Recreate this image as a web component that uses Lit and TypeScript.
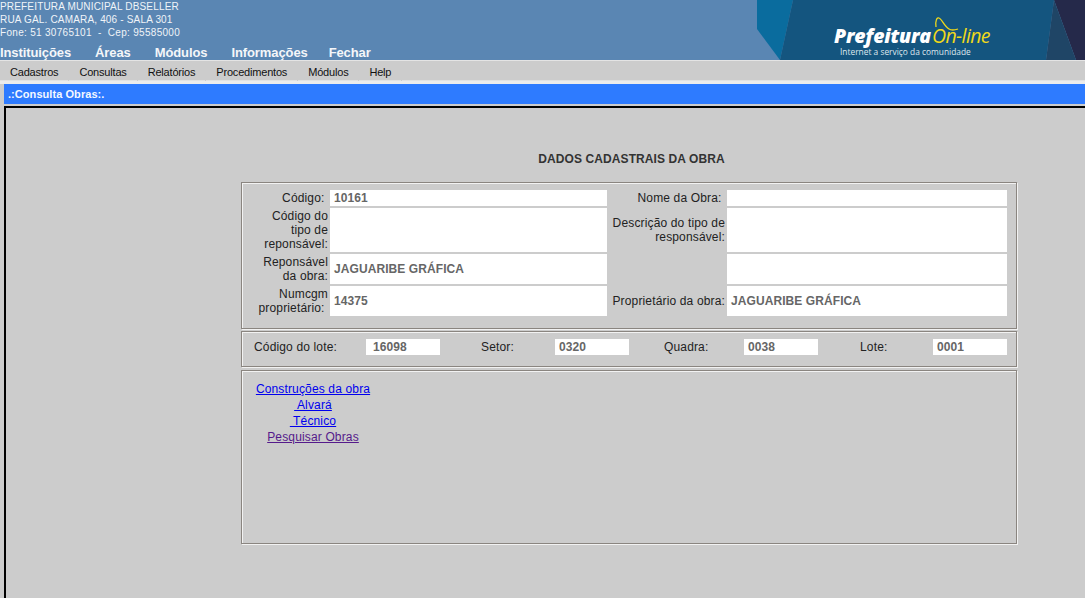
import { LitElement, html, css, svg } from 'lit';
import { customElement } from 'lit/decorators.js';

const NAV = ['Instituições', 'Áreas', 'Módulos', 'Informações', 'Fechar'];
const SUBMENU = ['Cadastros', 'Consultas', 'Relatórios', 'Procedimentos', 'Módulos', 'Help'];
const LOTE = [
  { label: 'Código do lote:', value: '16098' },
  { label: 'Setor:', value: '0320' },
  { label: 'Quadra:', value: '0038' },
  { label: 'Lote:', value: '0001' },
];

@customElement('app-root')
export class AppRoot extends LitElement {

  static styles = css`
    :host{
      display:block;
      width:1085px;
      height:598px;
      overflow:hidden;
      background:#ccc;
      font-family:"Liberation Sans",Arial,sans-serif;
      font-size:12px;
      color:#222;
    }
    .topo{
      position:relative;
      height:60px;
      background:#5a86b3;
      color:#fff;
      overflow:hidden;
    }
    .endereco{
      position:relative;
      font-size:10px;
      line-height:13px;
      letter-spacing:.17px;
      color:#f0f4f8;
    }
    .fone{
      letter-spacing:.3px;
    }
    .nav{
      position:absolute;
      left:0;
      top:45px;
      display:flex;
      gap:24px;
      font-size:13px;
      line-height:15px;
      font-weight:bold;
      letter-spacing:-.1px;
      color:#f4f6f9;
    }
    .nav span:last-child{
      margin-left:-3px;
    }
    .arte{
      position:absolute;
      right:0;
      top:0;
    }
    .marca{
      position:absolute;
      left:834px;
      top:26px;
      white-space:nowrap;
      font-family:"Open Sans",sans-serif;
    }
    .marca-linha{
      display:flex;
      align-items:baseline;
      height:20px;
      line-height:20px;
    }
    .marca-pref{
      font-size:19.5px;
      font-weight:800;
      font-style:italic;
      color:#fff;
      letter-spacing:-.2px;
    }
    .marca-on{
      font-size:19.5px;
      font-style:italic;
      font-weight:400;
      color:#f0d91a;
      letter-spacing:-.6px;
      margin-left:1px;
    }
    .marca-sub{
      margin:0 0 0 6px;
      font-size:8.4px;
      line-height:11px;
      color:#dfe8ee;
    }
    .submenu{
      display:flex;
      gap:1px;
      height:20px;
      border-top:1px solid #e4e4e4;
      font-size:11px;
      line-height:22px;
      letter-spacing:-.19px;
      color:#111;
    }
    .submenu div{
      box-sizing:border-box;
      height:20px;
      padding:0 10px;
      border-bottom:1px solid #e2e2e2;
    }
    .submenu .fim{
      flex:1;
    }
    .linha-clara{
      height:3px;
      background:#ececec;
    }
    .titulo-barra{
      margin-left:4px;
      height:20px;
      padding-left:4px;
      background:#2e7bff;
      color:#f4f8ff;
      font-size:11px;
      line-height:20px;
      font-weight:bold;
      letter-spacing:.06px;
    }
    .conteudo{
      margin:2px 0 0 4px;
      height:490px;
      border-top:2px solid #000;
      border-left:2px solid #000;
    }
    .form{
      display:flex;
      flex-direction:column;
      gap:2px;
      width:776px;
      margin-left:235px;
    }
    h1{
      margin:44px 0 14px;
      padding-left:5px;
      font-size:12px;
      line-height:14px;
      font-weight:bold;
      letter-spacing:.1px;
      text-align:center;
      color:#333;
    }
    .caixa{
      box-sizing:border-box;
      border:1px solid #8a8580;
      box-shadow:inset 1px 1px 0 #f2f2f2, 1px 1px 0 #f2f2f2;
      letter-spacing:.15px;
    }
    .dados{
      height:147px;
      padding-top:7px;
      display:grid;
      grid-template-columns:86px 277px 116px 280px;
      grid-template-rows:16px 44px 30px 30px;
      gap:2px;
      align-content:start;
    }
    .rot{
      align-self:center;
      text-align:right;
      line-height:14px;
    }
    .val{
      display:flex;
      align-items:center;
      padding-left:4px;
      background:#fff;
      color:#666;
      font-weight:bold;
      letter-spacing:.08px;
    }
    .lote{
      height:36px;
      margin-bottom:1px;
      padding:7px 0 0 12px;
      display:flex;
      align-items:flex-start;
    }
    .lote-par{
      display:flex;
      justify-content:space-between;
      line-height:16px;
    }
    .lote-par:nth-child(1){width:186px}
    .lote-par:nth-child(2){width:148px;margin-left:41px}
    .lote-par:nth-child(3){width:154px;margin-left:35px}
    .lote-par:nth-child(4){width:147px;margin-left:42px}
    .lote-val{
      box-sizing:border-box;
      width:74px;
      height:16px;
      padding-left:4px;
      background:#fff;
      color:#666;
      font-weight:bold;
      letter-spacing:.08px;
    }
    .lote-par:first-child .lote-val{
      padding-left:7px;
    }
    .links{
      height:174px;
      padding-top:10px;
    }
    .links ul{
      list-style:none;
      margin:0;
      padding:0;
      width:142px;
      text-align:center;
    }
    .links li{
      line-height:16px;
    }
    .links a{
      color:#00e;
      white-space:pre;
    }
    .links a.visitado{
      color:#551a8b;
    }
  `;

  render() {
    return html`
      <header class="topo">
        ${this.arte()}
        <div class="endereco">
          PREFEITURA MUNICIPAL DBSELLER<br>
          RUA GAL. CAMARA, 406 - SALA 301<br>
          <span class="fone">Fone: 51 30765101 &nbsp;- &nbsp;Cep: 95585000</span>
        </div>
        <nav class="nav">
          ${NAV.map(n => html`<span>${n}</span>`)}
        </nav>
        <div class="marca">
          <div class="marca-linha">
            <span class="marca-pref">Prefeitura</span><span class="marca-on">On-line</span>
          </div>
          <div class="marca-sub">Internet a serviço da comunidade</div>
        </div>
      </header>
      <div class="submenu">
        ${SUBMENU.map(s => html`<div>${s}</div>`)}
        <div class="fim"></div>
      </div>
      <div class="linha-clara"></div>
      <div class="titulo-barra">.:Consulta Obras:.</div>
      <main class="conteudo">
        <div class="form">
          <h1>DADOS CADASTRAIS DA OBRA</h1>
          <section class="caixa dados">
            <div class="rot">Código:&nbsp;</div>
            <div class="val">10161</div>
            <div class="rot">Nome da Obra:&nbsp;</div>
            <div class="val"></div>

            <div class="rot">Código do<br>tipo de<br>reponsável:</div>
            <div class="val"></div>
            <div class="rot">Descrição do tipo de<br>responsável:</div>
            <div class="val"></div>

            <div class="rot">Reponsável<br>da obra:</div>
            <div class="val">JAGUARIBE GRÁFICA</div>
            <div class="rot"></div>
            <div class="val"></div>

            <div class="rot">Numcgm<br>proprietário:&nbsp;</div>
            <div class="val">14375</div>
            <div class="rot">Proprietário da obra:</div>
            <div class="val">JAGUARIBE GRÁFICA</div>
          </section>
          <section class="caixa lote">
            ${LOTE.map(l => html`
              <div class="lote-par">
                <span>${l.label}</span>
                <span class="lote-val">${l.value}</span>
              </div>
            `)}
          </section>
          <section class="caixa links">
            <ul>
              <li><a href="#">Construções da obra</a></li>
              <li><a href="#"> Alvará</a></li>
              <li><a href="#"> Técnico</a></li>
              <li><a href="#" class="visitado">Pesquisar Obras</a></li>
            </ul>
          </section>
        </div>
      </main>
    `;
  }

  arte() {
    return html`
      <svg class="arte" width="328" height="60" viewBox="757 0 328 60">
        ${svg`
          <polygon points="757,0 793,0 780,60 757,29" fill="#0a6c9e"></polygon>
          <polygon points="793,0 1054,0 1046,60 780,60" fill="#14557f"></polygon>
          <polygon points="1054,0 1085,0 1085,60 1076,60" fill="#25294a"></polygon>
          <polygon points="1054,0 1046,60 1076,60" fill="#1f4566"></polygon>
          <path d="M936 27C935 21 937 17 939 18C942 19 944 26 949 29C952 31 955 30 958 29" fill="none" stroke="#f0d91a" stroke-width="1.3"></path>
        `}
      </svg>
    `;
  }
}
